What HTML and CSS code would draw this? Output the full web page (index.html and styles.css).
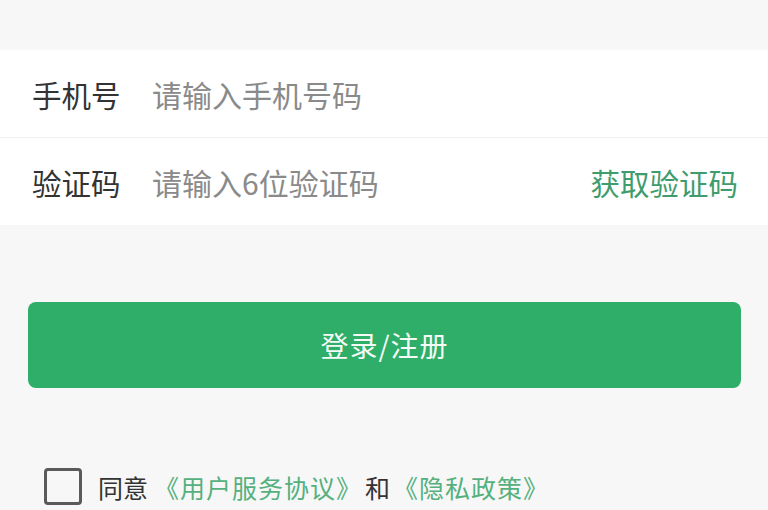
FILE: index.html
```html
<!DOCTYPE html>
<html lang="zh-CN">
<head>
<meta charset="utf-8">
<title>登录</title>
<link rel="stylesheet" href="styles.css">
</head>
<body>
<div class="page">
  <div class="fields">
    <div class="row">
      <span class="label">手机号</span>
      <span class="placeholder">请输入手机号码</span>
    </div>
    <div class="row">
      <span class="label">验证码</span>
      <span class="placeholder">请输入6位验证码</span>
      <span class="get-code">获取验证码</span>
    </div>
  </div>
  <div class="btn-wrap">
    <div class="login-btn">登录/注册</div>
  </div>
  <div class="agree">
    <span class="checkbox"></span>
    <span class="agree-text">同意</span>
    <span class="link">《用户服务协议》</span>
    <span class="and">和</span>
    <span class="link">《隐私政策》</span>
  </div>
</div>
</body>
</html>
```
FILE: styles.css
```css
html, body {
  margin: 0;
  padding: 0;
  background: #f7f7f7;
  font-family: "Noto Sans CJK SC", "Noto Sans", sans-serif;
}
.page {
  width: 768px;
  height: 510px;
  overflow: hidden;
  padding-top: 50px;
  box-sizing: border-box;
}
.fields {
  background: #ffffff;
}
.row {
  height: 87px;
  display: flex;
  align-items: center;
  padding: 0 30px 0 32px;
}
.row + .row {
  border-top: 1px solid #f0f0f0;
}
.label {
  width: 120px;
  font-size: 29.5px;
  color: #333333;
}
.placeholder {
  flex: 1;
  font-size: 30px;
  color: #8a8a8a;
}
.get-code {
  font-size: 29.5px;
  color: #3f9c6c;
}
.btn-wrap {
  padding: 77px 27px 0 28px;
}
.login-btn {
  height: 86px;
  border-radius: 8px;
  background: #2eae68;
  color: #f4fbf6;
  font-size: 28px;
  display: flex;
  align-items: center;
  justify-content: center;
  letter-spacing: 1px;
}
.agree {
  display: flex;
  align-items: center;
  padding: 80px 0 0 44px;
}
.checkbox {
  width: 38px;
  height: 37px;
  box-sizing: border-box;
  border: 3px solid #5a5a5a;
  border-radius: 4px;
  margin-right: 16px;
}
.agree-text {
  font-size: 25px;
  color: #333333;
  margin-right: 6px;
}
.and {
  font-size: 25px;
  color: #333333;
  margin: 0 3px;
}
.link {
  font-size: 25px;
  letter-spacing: 1px;
  color: #55b07e;
}
```
